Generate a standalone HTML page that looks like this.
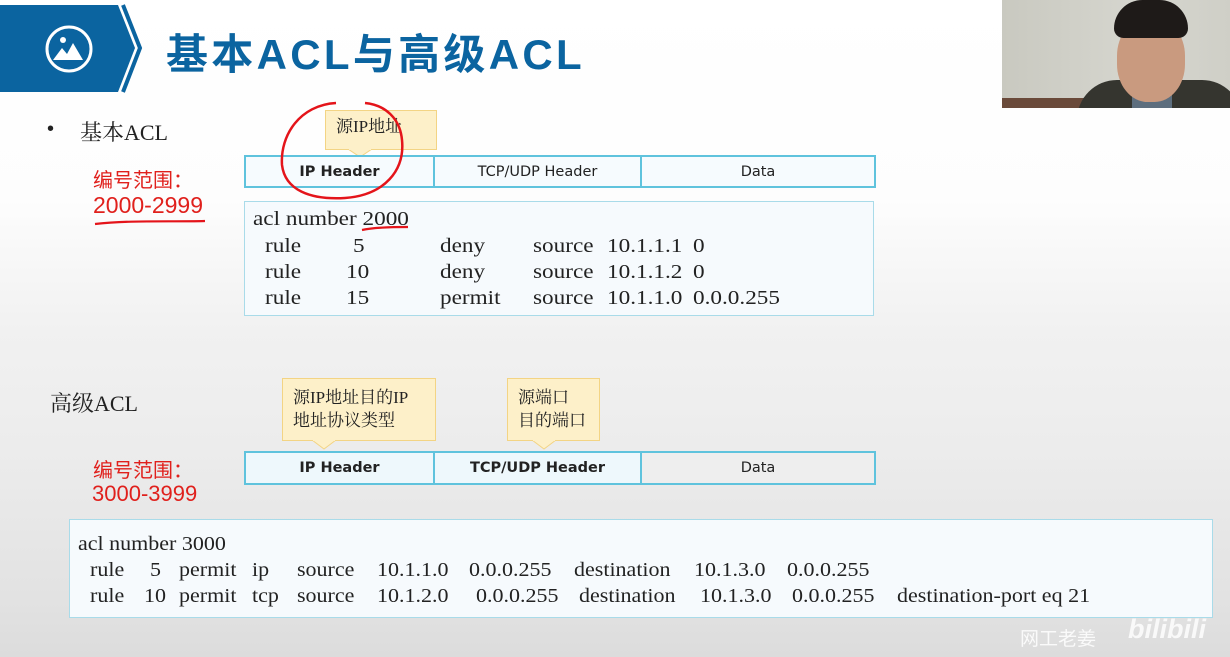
<!DOCTYPE html>
<html><head><meta charset="utf-8"><style>
body{margin:0;width:1230px;height:657px;overflow:hidden;position:relative;
background:linear-gradient(#ffffff 0px,#fdfdfd 200px,#f1f1f1 330px,#ececec 450px,#e2e2e2 600px,#dcdcdc 657px);
font-family:"Liberation Serif","Noto Serif CJK SC",serif;color:#222}
.a{position:absolute;white-space:nowrap}
.sans{font-family:"Liberation Sans","Noto Sans CJK SC",sans-serif}
.red{color:#e0201c;font-family:"Liberation Sans","Noto Sans CJK SC",sans-serif}
.tbl{position:absolute;height:31px;border:2px solid #5fc3dd;display:flex;background:#f6fbfe;box-sizing:border-box}
.tbl div{border-right:2px solid #5fc3dd;display:flex;align-items:center;justify-content:center;font-family:"DejaVu Sans","Liberation Sans",sans-serif;font-size:14.5px;color:#222}
.tbl div:last-child{border-right:none}
.call{position:absolute;background:#fdf0c9;border:1px solid #f3d484;box-sizing:border-box;font-size:17px;line-height:23px;padding:4px 10px}
.code{position:absolute;border:1.5px solid #a9dbe9;background:#f6fafd;box-sizing:border-box}
.c{position:absolute;font-size:20px;white-space:nowrap;transform:scaleX(1.16);transform-origin:left}
.d{position:absolute;font-size:20px;white-space:nowrap;transform:scaleX(1.1);transform-origin:left}
</style></head><body>
<!-- banner -->
<svg class="a" style="left:0;top:0" width="160" height="100">
<polygon points="0,5 118,5 135,48 118,92 0,92" fill="#0b64a0"/>
<polyline points="123,5 140,48 123,92" fill="none" stroke="#0b64a0" stroke-width="4"/>
<ellipse cx="69" cy="49" rx="22" ry="22" fill="none" stroke="#fff" stroke-width="3"/>
<circle cx="63" cy="40" r="3" fill="#fff"/>
<polygon points="53,60 62,48 67,54 73,43 83,60" fill="#fff"/>
</svg>
<div class="a sans" style="left:166px;top:21px;font-size:42px;font-weight:bold;color:#0b64a0;letter-spacing:3.3px">基本ACL与高级ACL</div>
<!-- webcam -->
<div class="a" style="left:1002px;top:0;width:228px;height:108px;background:linear-gradient(90deg,#c9c9c0,#d6d6cf 60%,#cfcfc7);overflow:hidden">
<div class="a" style="left:0;top:98px;width:228px;height:10px;background:#6a4a3a"></div>
<div class="a" style="left:75px;top:80px;width:165px;height:40px;border-radius:40px 40px 0 0;background:#35352f"></div>
<div class="a" style="left:130px;top:92px;width:40px;height:20px;background:#5d6e7e"></div>
<div class="a" style="left:115px;top:18px;width:68px;height:84px;border-radius:45%;background:#c99a7f"></div>
<div class="a" style="left:112px;top:0;width:74px;height:38px;border-radius:30px 30px 10px 10px;background:#1e1a18"></div>
</div>
<!-- basic -->
<div class="a sans" style="left:47px;top:118px;font-size:20px">•</div>
<div class="a" style="left:80px;top:116px;font-size:22px">基本ACL</div>
<div class="a red" style="left:93px;top:164px;font-size:20px">编号范围：</div>
<div class="a red" style="left:93px;top:192px;font-size:23px">2000-2999</div>
<div class="call" style="left:325px;top:110px;width:112px;height:40px">源IP地址</div>
<svg class="a" style="left:348px;top:149px" width="26" height="9"><polygon points="0,0 24,0 12,8" fill="#fdf0c9" stroke="#f3d484"/><line x1="1" y1="0" x2="23" y2="0" stroke="#fdf0c9" stroke-width="2"/></svg>
<div class="tbl" style="left:244px;top:155px;width:632px;height:33px">
<div style="width:187px;font-weight:bold">IP Header</div><div style="width:205px">TCP/UDP Header</div><div style="flex:1">Data</div></div>
<div class="code" style="left:244px;top:201px;width:630px;height:115px"></div>
<div class="c" style="left:253px;top:208px">acl number 2000</div>
<div class="c" style="left:265px;top:235px">rule</div><div class="c" style="left:353px;top:235px">5</div><div class="c" style="left:440px;top:235px">deny</div><div class="c" style="left:533px;top:235px">source</div><div class="c" style="left:607px;top:235px">10.1.1.1</div><div class="c" style="left:693px;top:235px">0</div>
<div class="c" style="left:265px;top:261px">rule</div><div class="c" style="left:346px;top:261px">10</div><div class="c" style="left:440px;top:261px">deny</div><div class="c" style="left:533px;top:261px">source</div><div class="c" style="left:607px;top:261px">10.1.1.2</div><div class="c" style="left:693px;top:261px">0</div>
<div class="c" style="left:265px;top:287px">rule</div><div class="c" style="left:346px;top:287px">15</div><div class="c" style="left:440px;top:287px">permit</div><div class="c" style="left:533px;top:287px">source</div><div class="c" style="left:607px;top:287px">10.1.1.0</div><div class="c" style="left:693px;top:287px">0.0.0.255</div>
<svg class="a" style="left:0;top:0" width="900" height="330">
<path d="M336,103 C300,105 280,135 282,165 C285,190 310,200 345,198 C385,195 405,170 402,140 C400,118 385,105 365,103" fill="none" stroke="#e4141a" stroke-width="2.5"/>
<path d="M95,224 C130,220 170,222 205,221" fill="none" stroke="#e4141a" stroke-width="2.2"/>
<path d="M362,230 C375,227 395,227 408,227" fill="none" stroke="#e4141a" stroke-width="2.2"/>
</svg>
<!-- advanced -->
<div class="a" style="left:50px;top:387px;font-size:22px">高级ACL</div>
<div class="a red" style="left:93px;top:454px;font-size:20px">编号范围：</div>
<div class="a red" style="left:92px;top:481px;font-size:22px">3000-3999</div>
<div class="call" style="left:282px;top:378px;width:154px;height:63px;padding-top:7px">源IP地址目的IP<br>地址协议类型</div>
<div class="call" style="left:507px;top:378px;width:93px;height:63px;padding-top:7px">源端口<br>目的端口</div>
<svg class="a" style="left:312px;top:440px" width="26" height="10"><polygon points="0,0 24,0 12,9" fill="#fdf0c9" stroke="#f3d484"/><line x1="1" y1="0" x2="23" y2="0" stroke="#fdf0c9" stroke-width="2"/></svg>
<svg class="a" style="left:532px;top:440px" width="26" height="10"><polygon points="0,0 24,0 12,9" fill="#fdf0c9" stroke="#f3d484"/><line x1="1" y1="0" x2="23" y2="0" stroke="#fdf0c9" stroke-width="2"/></svg>
<div class="tbl" style="left:244px;top:451px;width:632px;height:34px;background:#eef8fc">
<div style="width:187px;font-weight:bold">IP Header</div><div style="width:205px;font-weight:bold">TCP/UDP Header</div><div style="flex:1;background:#eeeeee">Data</div></div>
<div class="code" style="left:69px;top:519px;width:1144px;height:99px"></div>
<div class="d" style="left:78px;top:533px">acl number 3000</div>
<div class="d" style="left:90px;top:559px">rule</div><div class="d" style="left:150px;top:559px">5</div><div class="d" style="left:179px;top:559px">permit</div><div class="d" style="left:252px;top:559px">ip</div><div class="d" style="left:297px;top:559px">source</div><div class="d" style="left:377px;top:559px">10.1.1.0</div><div class="d" style="left:469px;top:559px">0.0.0.255</div><div class="d" style="left:574px;top:559px">destination</div><div class="d" style="left:694px;top:559px">10.1.3.0</div><div class="d" style="left:787px;top:559px">0.0.0.255</div>
<div class="d" style="left:90px;top:585px">rule</div><div class="d" style="left:144px;top:585px">10</div><div class="d" style="left:179px;top:585px">permit</div><div class="d" style="left:252px;top:585px">tcp</div><div class="d" style="left:297px;top:585px">source</div><div class="d" style="left:377px;top:585px">10.1.2.0</div><div class="d" style="left:476px;top:585px">0.0.0.255</div><div class="d" style="left:579px;top:585px">destination</div><div class="d" style="left:700px;top:585px">10.1.3.0</div><div class="d" style="left:792px;top:585px">0.0.0.255</div><div class="d" style="left:897px;top:585px">destination-port eq 21</div>
<!-- watermark -->
<div class="a sans" style="left:1020px;top:624px;font-size:19px;color:rgba(255,255,255,0.85)">网工老姜</div>
<div class="a sans" style="left:1128px;top:614px;font-size:27px;font-weight:bold;font-style:italic;color:rgba(255,255,255,0.8)">bilibili</div>
</body></html>
